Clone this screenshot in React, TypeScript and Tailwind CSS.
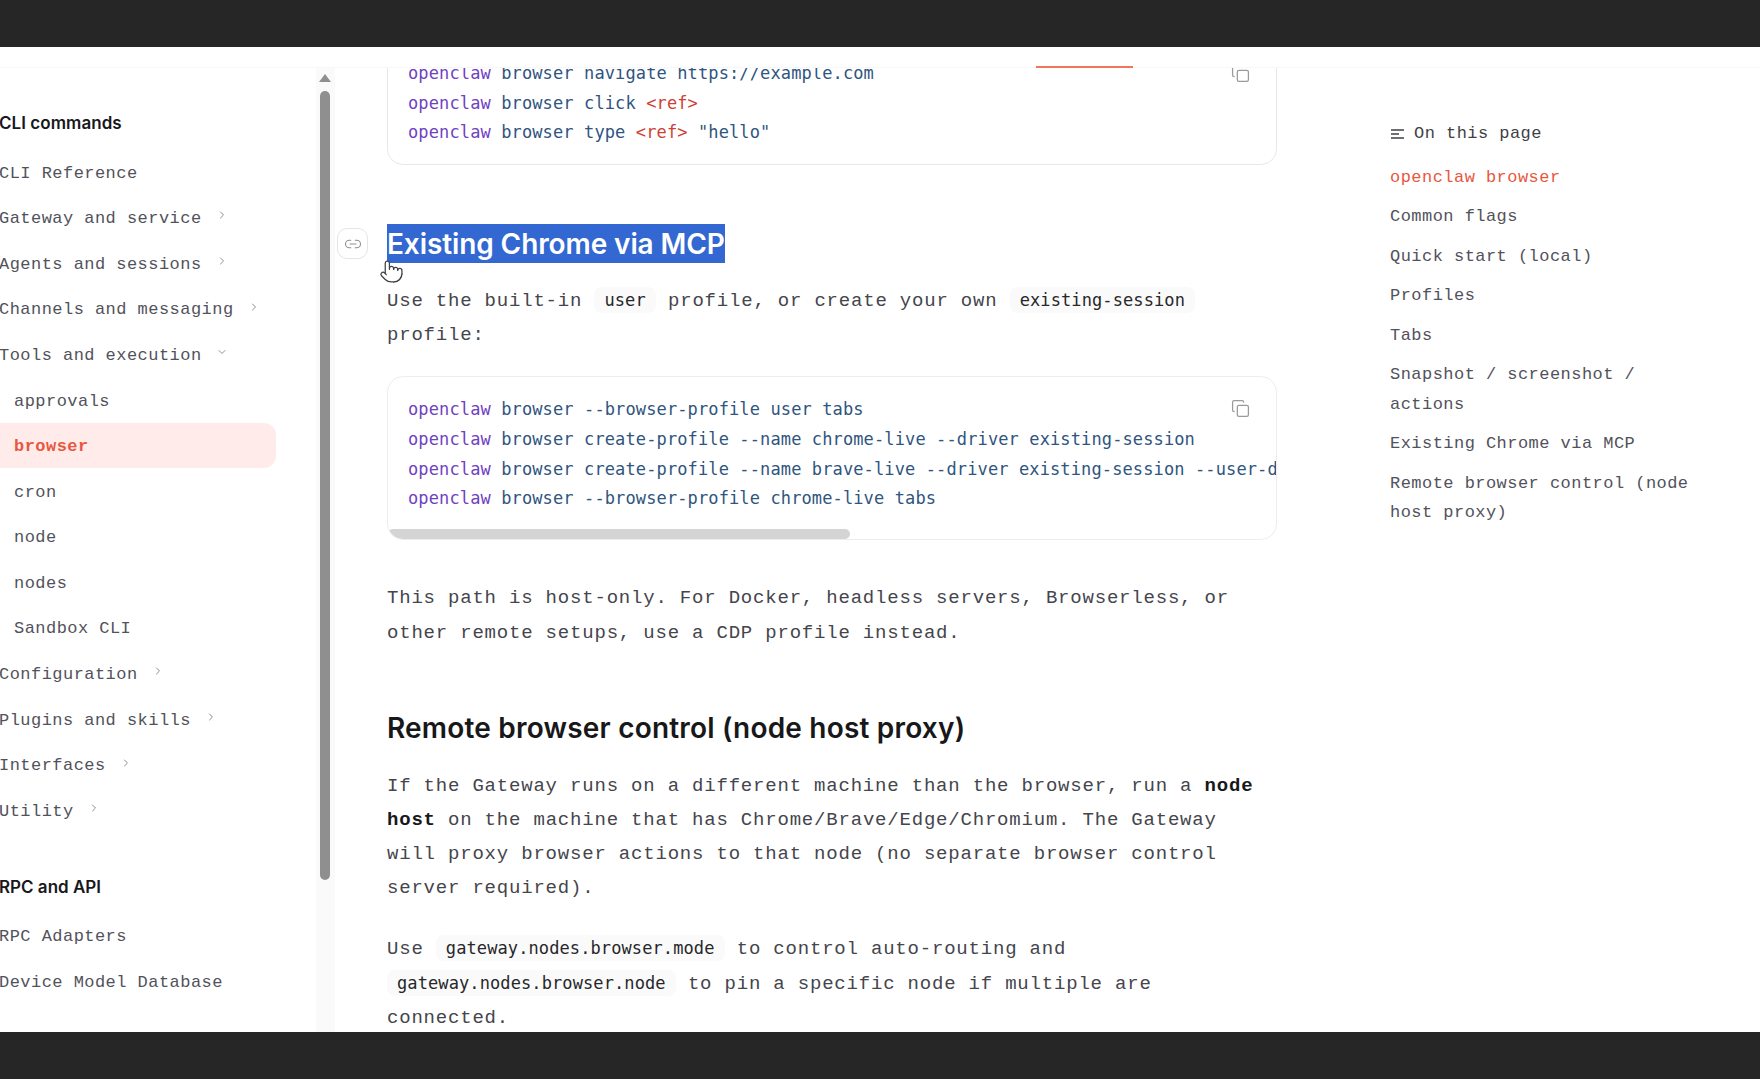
import React from "react";
import { ChevronDown, ChevronRight, Copy, Link2, Pointer } from "lucide-react";

const mono = "font-['Liberation_Mono',monospace]";
const code = "font-['DejaVu_Sans_Mono',monospace]";
const sans = "font-['Inter',sans-serif]";

function NavRow({ label, chevron, sub, active }: { label: string; chevron?: "r" | "d"; sub?: boolean; active?: boolean }) {
  return (
    <div
      className={`flex h-[45.6px] items-center pt-[3px] text-[17px] tracking-[0.46px] ${sub ? "pl-[14px]" : "-ml-px"} ${
        active ? "rounded-r-xl bg-[#ffecea] font-bold text-[#e8573f]" : "text-[#52525b]"
      }`}
    >
      <span>{label}</span>
      {chevron === "r" && <ChevronRight className="mb-[7px] ml-[14px] text-[#8f8f8f]" size={12} strokeWidth={2} />}
      {chevron === "d" && <ChevronDown className="mb-[7px] ml-[14px] text-[#8f8f8f]" size={12} strokeWidth={2} />}
    </div>
  );
}

function Line({ parts }: { parts: [string, string][] }) {
  return (
    <div className="h-[29.6px] leading-[29.6px]">
      {parts.map(([t, c], i) => (
        <span key={i} className={c}>
          {t}
        </span>
      ))}
    </div>
  );
}

const P = "text-[#6f42c1]";
const B = "text-[#2f5580]";
const R = "text-[#cf3f35]";

function Cmd({ rest }: { rest: string }) {
  return <Line parts={[["openclaw", P], [" " + rest, B]]} />;
}

function Chip({ children }: { children: React.ReactNode }) {
  return (
    <code className={`${code} rounded-lg bg-[#fafafa] px-[10px] py-[3px] text-[17px] font-medium tracking-[0.1px] text-[#27272a]`}>
      {children}
    </code>
  );
}

function Body({ className, children }: { className?: string; children: React.ReactNode }) {
  return <p className={`text-[19px] leading-[34.2px] tracking-[0.8px] text-[#45454c] ${className ?? ""}`}>{children}</p>;
}

function TocItem({ children, active, mt }: { children: React.ReactNode; active?: boolean; mt?: boolean }) {
  return (
    <div className={`text-[17px] leading-[29.8px] tracking-[0.46px] ${active ? "text-[#e8573f]" : "text-[#52525b]"} ${mt ? "mt-[9.6px]" : ""}`}>
      {children}
    </div>
  );
}

export default function App() {
  return (
    <div className={`flex h-[1079px] flex-col overflow-hidden bg-white ${mono}`}>
      <div className="h-[47px] shrink-0 bg-[#262626]" />
      <div className="relative z-10 h-[21px] shrink-0 border-b border-[#f7f7f7] bg-white">
        <div className="absolute bottom-[-1px] left-[1036px] h-[2px] w-[97px] bg-[#f0755a]" />
      </div>

      <div className="relative flex min-h-0 flex-1 overflow-hidden">
        <aside className="w-[316px] shrink-0 pt-[43px]">
          <div className={`${sans} -ml-px mb-[14px] h-6 text-[17px] leading-6 font-semibold tracking-[0.05px] text-[#18181b]`}>CLI commands</div>
          <div className="w-[276px]">
            <NavRow label="CLI Reference" />
            <NavRow label="Gateway and service" chevron="r" />
            <NavRow label="Agents and sessions" chevron="r" />
            <NavRow label="Channels and messaging" chevron="r" />
            <NavRow label="Tools and execution" chevron="d" />
            <NavRow label="approvals" sub />
            <NavRow label="browser" sub active />
            <NavRow label="cron" sub />
            <NavRow label="node" sub />
            <NavRow label="nodes" sub />
            <NavRow label="Sandbox CLI" sub />
            <NavRow label="Configuration" chevron="r" />
            <NavRow label="Plugins and skills" chevron="r" />
            <NavRow label="Interfaces" chevron="r" />
            <NavRow label="Utility" chevron="r" />
          </div>
          <div className={`${sans} -ml-px mt-[42px] mb-[14px] h-6 text-[17px] leading-6 font-semibold text-[#18181b]`}>RPC and API</div>
          <NavRow label="RPC Adapters" />
          <NavRow label="Device Model Database" />
        </aside>

        <div className="flex w-[19px] shrink-0 flex-col items-center bg-[#fafafa] pt-[6px] pr-px">
          <div className="h-0 w-0 border-x-[6px] border-b-[8px] border-x-transparent border-b-[#8f8f8f]" />
          <div className="mt-[9px] h-[789px] w-[10px] rounded-full bg-[#8f8f8f]" />
        </div>

        <main className="ml-[52px] w-[890px] shrink-0">
          <div className={`${code} relative -mt-[30px] h-[127px] rounded-2xl border border-[#e8e8e8] px-5 pt-[20px] text-[17px] tracking-[0.12px]`}>
            <Cmd rest="browser navigate https://example.com" />
            <Line parts={[["openclaw", P], [" browser click ", B], ["<ref>", R]]} />
            <Line parts={[["openclaw", P], [" browser type ", B], ["<ref>", R], [' "hello"', B]]} />
            <Copy className="absolute top-[25px] right-[26px] text-[#9a9a9a]" size={19} strokeWidth={1.6} />
          </div>

          <h2 className={`${sans} mt-[59px] flex h-[39px] items-center text-[28px] font-semibold tracking-[-0.1px] text-white`}>
            <span className="flex h-full items-center bg-[#3367d1]">Existing Chrome via MCP</span>
          </h2>

          <Body className="mt-[20px]">
            Use the built-in <Chip>user</Chip> profile, or create your own <Chip>existing-session</Chip> profile:
          </Body>

          <div className={`${code} relative mt-[24px] h-[164px] overflow-hidden rounded-2xl border border-[#ededed] px-5 pt-[18px] text-[17px] tracking-[0.12px] whitespace-pre`}>
            <Cmd rest="browser --browser-profile user tabs" />
            <Cmd rest="browser create-profile --name chrome-live --driver existing-session" />
            <Cmd rest="browser create-profile --name brave-live --driver existing-session --user-data-dir" />
            <Cmd rest="browser --browser-profile chrome-live tabs" />
            <Copy className="absolute top-[22px] right-[26px] bg-white text-[#9a9a9a]" size={19} strokeWidth={1.6} />
            <div className="absolute bottom-0 left-0 h-[10px] w-[462px] rounded-full bg-[#d4d4d4]" />
          </div>

          <Body className="mt-[41px]">
            This path is host-only. For Docker, headless servers, Browserless, or other remote setups, use a CDP profile instead.
          </Body>

          <h2 className={`${sans} mt-[59px] h-[39px] text-[28px] leading-[39px] font-semibold tracking-[0.2px] text-[#18181b]`}>
            Remote browser control (node host proxy)
          </h2>

          <Body className="mt-[21px]">
            If the Gateway runs on a different machine than the browser, run a <strong className="font-bold text-[#18181b]">node host</strong> on the
            machine that has Chrome/Brave/Edge/Chromium. The Gateway will proxy browser actions to that node (no separate browser control server
            required).
          </Body>

          <Body className="mt-[25px]">
            Use <Chip>gateway.nodes.browser.mode</Chip> to control auto-routing and <Chip>gateway.nodes.browser.node</Chip> to pin a specific node if
            multiple are connected.
          </Body>
        </main>

        <aside className="ml-[113px] w-[310px] shrink-0 pt-[51px]">
          <div className="flex h-[29px] items-center text-[17px] tracking-[0.46px] text-[#3f3f46]">
            <svg className="mr-[10px] ml-px" width="13" height="10" viewBox="0 0 13 10" fill="none" stroke="#3f3f46" strokeWidth="1.5">
              <path d="M0 1h13M0 5h8M0 9h13" />
            </svg>
            On this page
          </div>
          <div className="mt-[15px]">
            <TocItem active>openclaw browser</TocItem>
            <TocItem mt>Common flags</TocItem>
            <TocItem mt>Quick start (local)</TocItem>
            <TocItem mt>Profiles</TocItem>
            <TocItem mt>Tabs</TocItem>
            <TocItem mt>Snapshot / screenshot / actions</TocItem>
            <TocItem mt>Existing Chrome via MCP</TocItem>
            <TocItem mt>Remote browser control (node host proxy)</TocItem>
          </div>
        </aside>

        <button className="absolute top-[160px] left-[337px] flex h-[31px] w-[31px] items-center justify-center rounded-[10px] border border-[#e5e5e5] bg-white text-[#8f8f8f]">
          <Link2 size={18} strokeWidth={1.5} />
        </button>
        <Pointer className="absolute top-[191px] left-[379px] fill-white text-[#3f3f46]" size={25} strokeWidth={1.2} />
      </div>

      <div className="h-[47px] shrink-0 bg-[#262626]" />
    </div>
  );
}
